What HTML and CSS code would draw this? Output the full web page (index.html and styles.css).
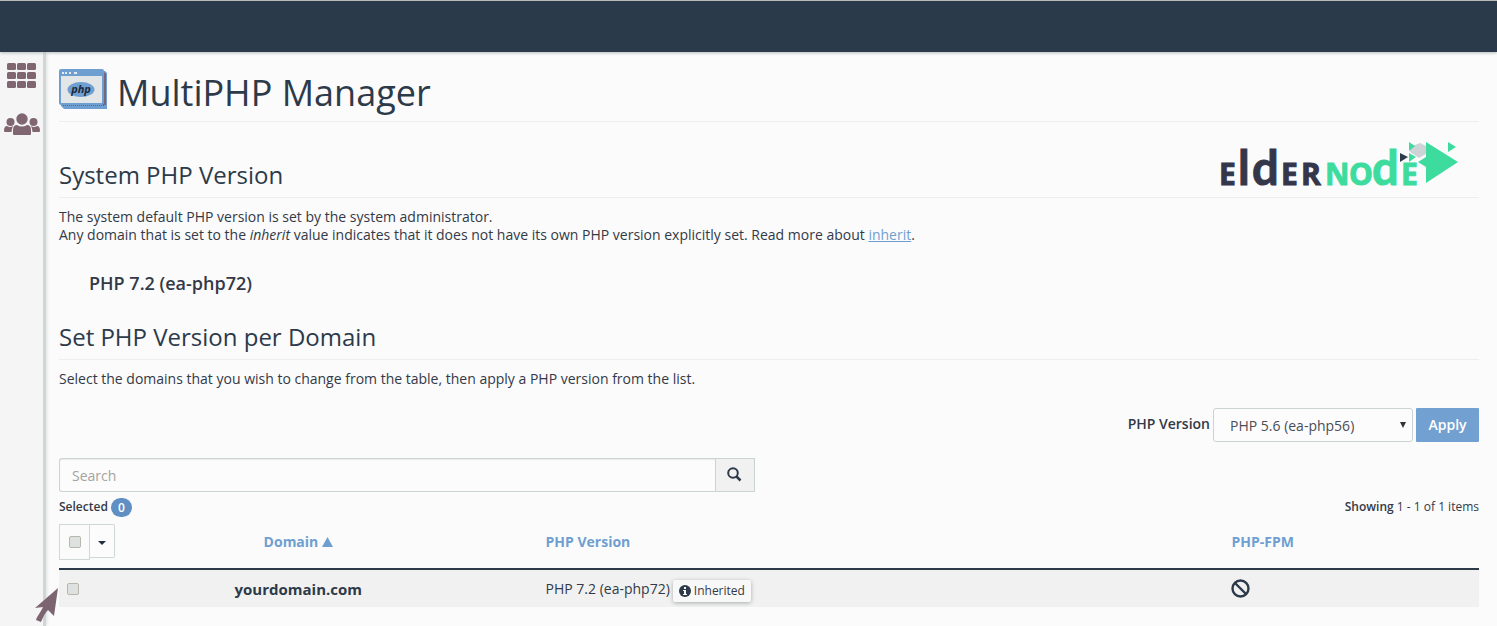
FILE: index.html
```html
<!DOCTYPE html>
<html lang="en">
<head>
<meta charset="utf-8">
<title>MultiPHP Manager</title>
<link rel="stylesheet" href="styles.css">
</head>
<body>
<header class="topbar"></header>
<div class="layout">
  <nav class="sidebar" aria-label="Main">
    <a class="side-link" href="#" aria-label="Home">
      <svg width="30" height="26" viewBox="0 0 30 26" fill="currentColor">
        <rect x="0" y="0" width="9" height="7" rx="1.5"/><rect x="10" y="0" width="9" height="7" rx="1.5"/><rect x="20" y="0" width="9" height="7" rx="1.5"/>
        <rect x="0" y="9" width="9" height="7" rx="1.5"/><rect x="10" y="9" width="9" height="7" rx="1.5"/><rect x="20" y="9" width="9" height="7" rx="1.5"/>
        <rect x="0" y="18" width="9" height="7" rx="1.5"/><rect x="10" y="18" width="9" height="7" rx="1.5"/><rect x="20" y="18" width="9" height="7" rx="1.5"/>
      </svg>
    </a>
    <a class="side-link" href="#" aria-label="Users">
      <svg width="36" height="22" viewBox="0 0 36 22" fill="currentColor">
        <circle cx="18" cy="6" r="5.7"/><circle cx="6.500" cy="9" r="4"/><circle cx="29.500" cy="9" r="4"/>
        <path d="M9 21v-4q0-5 4-5 5 3 10 0 4 0 4 5v4q0 1-1 1H10q-1 0-1-1z"/>
        <path d="M0 18q0-5 3-5 3 2 6 0-1 2-1.500 6H1q-1 0-1-1zM36 18q0-5-3-5-3 2-6 0 1 2 1.500 6H35q1 0 1-1z"/>
      </svg>
    </a>
  </nav>
  <main class="main">
    <div class="title-row">
      <svg class="title-icon" width="48" height="40" viewBox="0 0 48 40" aria-hidden="true">
        <path d="M2 2h44l2 2v36H5l-3-3z" fill="#6f9fd0"/>
        <path d="M44 2l3 3v31H5l-3-2h42z" fill="#7c6575"/>
        <path d="M4 36h42" stroke="#2c3a4a" stroke-dasharray="1 1"/>
        <rect x="1" y="1" width="43" height="34" rx="1" fill="#e3e6e6" stroke="#6f9fd0" stroke-width="2"/>
        <path d="M1 1h43v6H1z" fill="#6f9fd0"/>
        <path d="M3 4h2m1 0h2m2 0h2m3 0h3" stroke="#e6ecee" stroke-width="2"/>
        <ellipse cx="22" cy="20.500" rx="13.500" ry="7.500" fill="#6f9fd0"/>
        <text class="php-mark" x="22" y="24" text-anchor="middle">php</text>
      </svg>
      <h1 class="title">MultiPHP Manager</h1>
    </div>

    <div class="section-head">
      <h2 class="section-title">System PHP Version</h2>
      <svg class="brand" width="240" height="50" viewBox="0 0 240 50" role="img" aria-label="Eldernode">
        <text class="brand-dark" y="43"><tspan class="small" x="0">E</tspan><tspan class="tall" x="19">l</tspan><tspan class="tall" x="33">d</tspan><tspan class="small" x="62">E</tspan><tspan class="small" x="82">R</tspan></text>
        <text class="brand-green" y="43"><tspan class="small" x="106">N</tspan><tspan class="small" x="130">O</tspan><tspan class="tall" x="153">d</tspan><tspan class="small" x="182">E</tspan></text>
        <path d="M191 5l10-4 6 3v8l-7 4-9-6z" fill="#ced3d8"/>
        <path d="M190 0l6 4-6 5zM190 11l7 4-7 5zM229 0l8 5-8 5z" fill="#3ddc9e"/>
        <path d="M207 0l32 20-32 21V25l-8-5 8-5z" fill="#3ddc9e"/>
        <path d="M181 11l8 4-8 5z" fill="#2c3a4a"/>
      </svg>
    </div>
    <p class="text">The system default PHP version is set by the system administrator.<br>Any domain that is set to the <em>inherit</em> value indicates that it does not have its own PHP version explicitly set. Read more about <a class="link" href="#">inherit</a>.</p>
    <p class="current">PHP 7.2 (ea-php72)</p>

    <div class="section-head second">
      <h2 class="section-title">Set PHP Version per Domain</h2>
    </div>
    <p class="text">Select the domains that you wish to change from the table, then apply a PHP version from the list.</p>

    <form class="apply-form">
      <label class="apply-label" for="version">PHP Version</label>
      <span class="select-wrap">
        <select class="version" id="version"><option>PHP 5.6 (ea-php56)</option></select>
        <svg class="select-arrow" width="6" height="6" viewBox="0 0 6 6" aria-hidden="true"><path d="M0 0h6L3 6z" fill="#333"/></svg>
      </span>
      <button class="apply" type="button">Apply</button>
    </form>

    <form class="search-form">
      <input class="search" type="text" placeholder="Search" aria-label="Search">
      <button class="search-button" type="button" aria-label="Search">
        <svg width="15" height="15" viewBox="0 0 15 15" fill="none" stroke="#2c3a4a"><circle cx="6" cy="6" r="4.800" stroke-width="2"/><path d="M9.500 9.500l4 4" stroke-width="2.500"/></svg>
      </button>
    </form>

    <div class="status">
      <span class="selected">Selected <span class="count">0</span></span>
      <span><span class="strong">Showing</span> 1 - 1 of 1 items</span>
    </div>

    <table class="domains">
      <colgroup><col class="col-check"><col><col class="col-version"><col class="col-fpm"></colgroup>
      <thead>
        <tr>
          <th class="head-check">
            <div class="check-group">
              <label class="check-all"><input class="check" type="checkbox" aria-label="Select all"></label>
              <button class="check-menu" type="button" aria-label="Selection menu"><svg width="8" height="4" viewBox="0 0 8 4"><path d="M0 0h8L4 4z" fill="#222f3e"/></svg></button>
            </div>
          </th>
          <th class="domain-cell"><a class="sort" href="#">Domain <svg width="11" height="10" viewBox="0 0 11 10"><path d="M5.500 0L11 10H0z" fill="currentColor"/></svg></a></th>
          <th><a class="sort" href="#">PHP Version</a></th>
          <th><a class="sort" href="#">PHP-FPM</a></th>
        </tr>
      </thead>
      <tbody>
        <tr>
          <td><input class="check" type="checkbox" aria-label="Select yourdomain.com"></td>
          <td class="domain-cell domain-name">yourdomain.com</td>
          <td>
            <div class="version-cell">PHP 7.2 (ea-php72)
              <span class="inherited"><svg width="12" height="12" viewBox="0 0 12 12"><circle cx="6" cy="6" r="6" fill="#2c3a4a"/><path d="M5 2h2v2H5zM4 5h3v4h1v1H4V9h1V6H4z" fill="#f8f8f8"/></svg>Inherited</span>
            </div>
          </td>
          <td><svg class="ban" width="19" height="19" viewBox="0 0 19 19" fill="none" stroke="#2c3a4a" stroke-width="2.400" role="img" aria-label="Disabled"><circle cx="9.500" cy="9.500" r="8"/><path d="M4 4l11 11"/></svg></td>
        </tr>
      </tbody>
    </table>
  </main>
</div>
<svg class="pointer" width="26" height="36" viewBox="0 0 26 36" aria-hidden="true"><path d="M23 1L0 21l8-1c-2 5-6 9-7 13l5 2c2-5 4-9 7-12l6 6z" fill="#7c6570"/></svg>
</body>
</html>
```

FILE: styles.css
```css
* { box-sizing: border-box; }
body {
  margin: 0;
  min-height: 100vh;
  display: flex;
  flex-direction: column;
  position: relative;
  background: #fbfbfb;
  color: #333947;
  font: 14px/18px "Open Sans", sans-serif;
}
h1, h2, p { margin: 0; }
svg { flex: none; }
.topbar {
  height: 52px;
  background: #2b3a4a;
  border-top: 1px solid #b8bab5;
  box-shadow: 0 1px 3px #b4bcbc;
  position: relative;
}
.layout { display: flex; flex: 1; }
.sidebar {
  width: 46px;
  padding: 11px 0 0;
  display: flex;
  flex-direction: column;
  align-items: center;
  gap: 24px;
  background: #f5f5f5;
  border-right: 3px solid #d0d6d6;
  box-shadow: 1px 0 3px #dde1e1;
}
.side-link { display: flex; color: #7f6670; }
.main { flex: 1; min-width: 0; padding: 0 18px 0 13px; }
.title-row {
  height: 70px;
  padding-top: 17px;
  display: flex;
  align-items: flex-start;
  gap: 10px;
  border-bottom: 1px solid #eee;
}
.title { font-size: 36px; line-height: 48px; font-weight: 400; color: #2c3a4a; }
.php-mark { font: italic 700 11px "Open Sans", sans-serif; fill: #1d2838; }
.section-head {
  height: 76px;
  display: flex;
  justify-content: space-between;
  align-items: flex-end;
  border-bottom: 1px solid #eee;
  margin-bottom: 10px;
  padding: 0 20px 5px 0;
}
.section-head.second { height: 64px; }
.section-title { font-size: 24px; line-height: 34px; font-weight: 400; color: #2c3a4a; }
.brand { overflow: visible; }
.brand text { font-family: "Liberation Sans Narrow", "Arial Narrow", "Open Sans", sans-serif; font-weight: 700; stroke-width: 1px; }
.brand-dark { fill: #34364a; stroke: #34364a; }
.brand-green { fill: #3ddc9e; stroke: #3ddc9e; }
.brand .small { font-size: 30px; }
.brand .tall { font-size: 47px; font-family: Lato, sans-serif; }
.link { color: #6f9fd0; text-decoration: underline; }
.current { padding: 27px 0 1px 30px; font-size: 18px; line-height: 24px; font-weight: 600; }
.apply-form {
  margin-top: 20px;
  display: flex;
  justify-content: flex-end;
  align-items: center;
  gap: 3px;
}
.apply-label, .strong { font-weight: 600; }
.apply-label { padding-bottom: 2px; }
.select-wrap { position: relative; width: 200px; }
.version {
  appearance: none;
  width: 100%;
  height: 34px;
  padding: 2px 16px 0;
  border: 1px solid #cbd3d3;
  border-radius: 3px;
  background: #fcfcfc;
  color: #4a4d57;
  font: inherit;
}
.select-arrow { position: absolute; right: 7px; top: 14px; }
.apply {
  width: 63px;
  height: 34px;
  padding: 0;
  border: 0;
  border-radius: 1px;
  background: #72a0d0;
  color: #fff;
  font: inherit;
  font-weight: 600;
}
.search-form { margin-top: 16px; width: 49%; display: flex; }
.search {
  flex: 1;
  min-width: 0;
  height: 34px;
  padding: 1px 12px 0;
  border: 1px solid #cbd3d3;
  border-right: 0;
  border-radius: 3px 0 0 3px;
  background: #fcfcfc;
  font: inherit;
  box-shadow: inset 0 1px 1px #e8eaea;
}
.search::placeholder { color: #a3a3a0; opacity: 1; }
.search-button {
  width: 40px;
  display: grid;
  place-items: center;
  padding: 0 0 2px;
  border: 1px solid #cbd3d3;
  background: #f1f1f1;
}
.status {
  margin-top: 4px;
  height: 22px;
  display: flex;
  justify-content: space-between;
  align-items: center;
  font-size: 12px;
}
.selected { display: flex; align-items: center; gap: 3px; font-weight: 600; }
.count {
  width: 21px;
  line-height: 19px;
  border-radius: 10px;
  text-align: center;
  background: #5f8fc3;
  color: #fff;
}
.domains { width: 100%; margin-top: 6px; border-collapse: collapse; table-layout: fixed; }
.col-check { width: 64px; }
.col-version { width: 48.3%; }
.col-fpm { width: 18%; }
.domains th { padding: 0 8px 8px; text-align: left; height: 45px; border-bottom: 2px solid #2c3a4a; }
.domains td { padding: 0 8px; height: 38px; background: #f1f1f1; }
.domains .head-check { padding-left: 0; }
.domains .domain-cell { padding-right: 72px; text-align: center; }
.sort { color: #6f9fd0; text-decoration: none; font-weight: 700; }
.domain-name { font-size: 15px; font-weight: 700; color: #2c3a4a; }
.check-group { display: flex; align-items: flex-start; }
.check-all {
  width: 31px;
  height: 36px;
  display: grid;
  place-items: center;
  border: 1px solid #d0d7d7;
}
.check {
  appearance: none;
  display: block;
  width: 12px;
  height: 12px;
  margin: 0;
  border: 1px solid #b8b7ad;
  border-radius: 2px;
  background: #dde1df;
}
.check-menu {
  width: 25px;
  height: 34px;
  padding: 4px 0 0;
  display: grid;
  place-items: center;
  border: 1px solid #d0d7d7;
  border-left: 0;
  border-radius: 0 2px 2px 0;
  background: #fcfcfc;
}
.version-cell { display: flex; align-items: center; gap: 3px; }
.inherited {
  display: flex;
  align-items: center;
  gap: 3px;
  margin-top: 4px;
  padding: 2px 6px;
  background: #f8f8f8;
  border-radius: 2px;
  box-shadow: 0 1px 4px #a8adab;
  font-size: 12px;
}
.ban { display: block; }
.pointer { position: absolute; left: 35px; top: 587px; }
```
